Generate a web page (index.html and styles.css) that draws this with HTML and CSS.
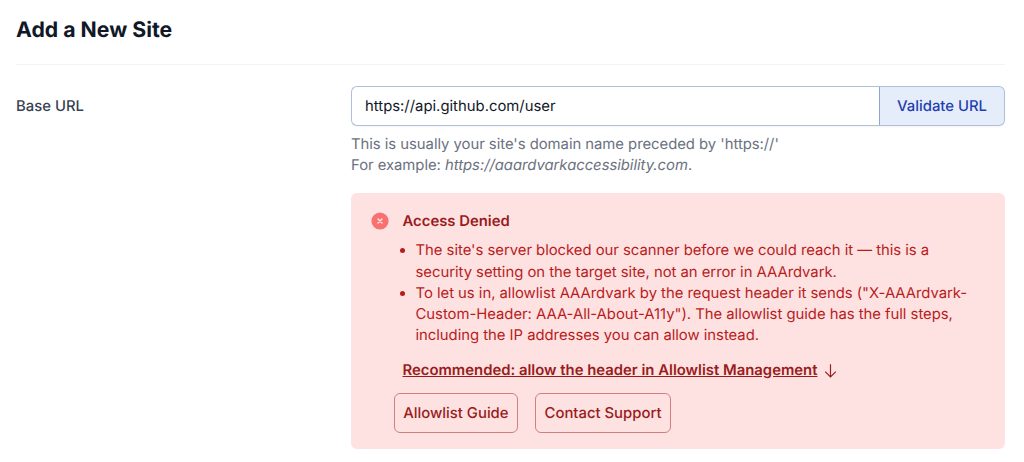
FILE: index.html
```html
<!DOCTYPE html>
<html lang="en">
<head>
<meta charset="utf-8">
<title>Add a New Site</title>
<link rel="stylesheet" href="styles.css">
</head>
<body>
<main class="page">
  <header class="head"><h1>Add a New Site</h1></header>
  <section class="row">
    <label class="label" for="url">Base URL</label>
    <div class="field">
      <div class="group">
        <input id="url" class="input" type="text" value="https://api.github.com/user">
        <button class="validate" type="button">Validate URL</button>
      </div>
      <p class="help">This is usually your site's domain name preceded by 'https://'<br>For example: <em>https://aaardvarkaccessibility.com</em>.</p>
      <div class="alert">
        <svg class="icon" viewBox="0 0 20 20" aria-hidden="true"><circle cx="10" cy="10" r="8.6" fill="#f87171"/><path d="M8 8l4 4M12 8l-4 4" stroke="#fee2e2" stroke-width="1.5" stroke-linecap="round" fill="none"/></svg>
        <div class="body">
          <h2>Access Denied</h2>
          <ul>
            <li>The site's server blocked our scanner before we could reach it — this is a security setting on the target site, not an error in AAArdvark.</li>
            <li>To let us in, allowlist AAArdvark by the request header it sends ("X-AAArdvark-Custom-Header: AAA-All-About-A11y"). The allowlist guide has the full steps, including the IP addresses you can allow instead.</li>
          </ul>
          <p class="rec"><a href="#">Recommended: allow the header in Allowlist Management</a><svg class="arrow" viewBox="0 0 16 16" aria-hidden="true"><path d="M8 2v12M3 9l5 5 5-5" stroke="currentColor" stroke-width="1.1" fill="none"/></svg></p>
          <div class="actions">
            <button type="button">Allowlist Guide</button>
            <button type="button">Contact Support</button>
          </div>
        </div>
      </div>
    </div>
  </section>
</main>
</body>
</html>
```
FILE: styles.css
```css
* { box-sizing: border-box; }
html, body { margin: 0; background: #fff; }
body { font-family: Inter, "Liberation Sans", sans-serif; overflow: hidden; text-rendering: geometricPrecision; }
input, button { text-rendering: geometricPrecision; }
.page { padding: 16px 19px 0 16px; }
.head { height: 49px; border-bottom: 1px solid #f3f4f6; }
h1 { margin: 0; font-size: 21.25px; line-height: 28px; font-weight: 700; color: #111827; }
.row { display: grid; grid-template-columns: 335px 1fr; padding-top: 20.5px; }
.label { font-size: 14.875px; line-height: 40px; font-weight: 500; color: #374151; }
.group { display: flex; height: 40px; box-shadow: 0 1px 2px rgba(0,0,0,.05); border-radius: 6px; }
.input { flex: 1; min-width: 0; border: 1px solid #b0bfdc; border-right: 0; border-radius: 6px 0 0 6px; padding: 0 13px; font: 14.875px Inter, sans-serif; color: #111827; background: #fff; outline: 0; }
.validate { width: 126px; border: 1px solid #b0bfdc; border-left-color: #8fa6d0; border-radius: 0 6px 6px 0; background: #e5edfb; color: #1e40af; font: 500 14.875px Inter, sans-serif; padding: 0; }
.help { margin: 8px 0 0; font-size: 14.875px; line-height: 21.25px; letter-spacing: -0.04px; color: #6b7280; }
.alert { display: flex; margin-top: 17px; height: 256px; padding: 17.5px 17px 0 18.5px; background: #fee2e2; border-radius: 6px; color: #b91c1c; }
.icon { flex: none; width: 20px; height: 20px; margin-right: 13px; }
.body { flex: 1; min-width: 0; }
h2 { margin: 0; font-size: 14.875px; line-height: 21.25px; font-weight: 600; color: #991b1b; }
ul { margin: 8.5px 0 0; padding-left: 13px; font-size: 14.875px; line-height: 21.25px; letter-spacing: -0.03px; }
.rec { display: flex; align-items: center; margin: 13px 0 0; font-size: 14.875px; line-height: 21.25px; font-weight: 600; color: #991b1b; }
.rec a { color: inherit; text-decoration: underline; }
.arrow { width: 17px; height: 17px; margin-left: 5px; }
.actions { display: flex; gap: 16.5px; margin: 12.25px 0 0 -9px; }
.actions button { height: 40px; padding: 0 8.75px; border: 1px solid #cf7f7f; border-radius: 6px; background: transparent; color: #991b1b; font: 500 14.875px Inter, sans-serif; }
```
